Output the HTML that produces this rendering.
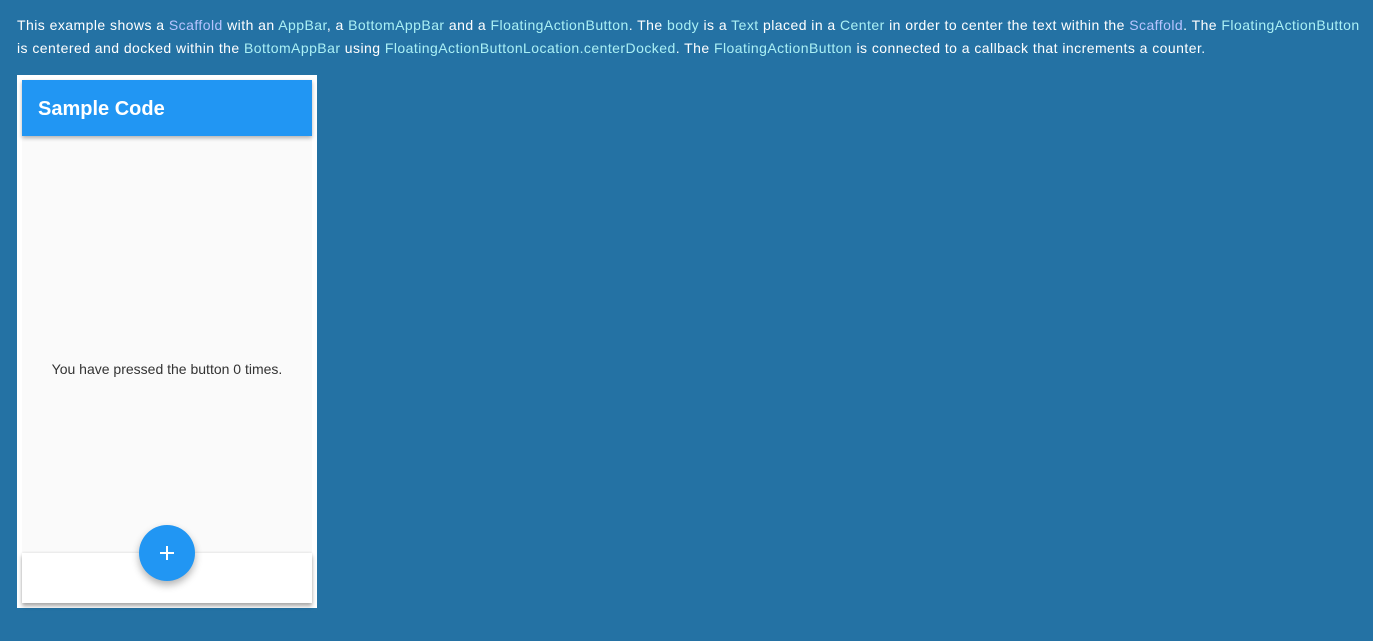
<!DOCTYPE html>
<html><head><style>
body{margin:0;width:1373px;height:641px;background:#2472a4;font-family:"Liberation Sans",sans-serif;overflow:hidden;position:relative}
p{position:absolute;left:17px;top:14px;width:1356px;margin:0;color:#fff;font-size:14px;line-height:23px;letter-spacing:0.45px;white-space:nowrap}
a{color:#aaf0f5;text-decoration:none}
a.v{color:#b7c4ff}
.frame{position:absolute;left:17px;top:75px;width:300px;height:533px;background:#fff}
.in{position:absolute;left:5px;top:5px;width:290px;height:523px;background:#fafafa}
.bar{position:absolute;left:0;top:0;width:290px;height:56px;background:#2196f3;box-shadow:0 2px 4px rgba(0,0,0,.3);color:#fff;font-size:20px;font-weight:bold;line-height:58px;padding-left:16px;box-sizing:border-box}
.msg{position:absolute;left:0;width:290px;top:281px;text-align:center;font-size:14px;color:#333}
.bot{position:absolute;left:0;top:473px;width:290px;height:50px;background:#fff;box-shadow:0 -1px 2px rgba(0,0,0,.06),0 3px 4px rgba(0,0,0,.35)}
.fab{position:absolute;left:117px;top:445px;width:56px;height:56px;border-radius:50%;background:#2196f3;box-shadow:0 4px 8px rgba(0,0,0,.3)}
</style></head><body>
<p>This example shows a <a class="v">Scaffold</a> with an <a>AppBar</a>, a <a>BottomAppBar</a> and a <a>FloatingActionButton</a>. The <a>body</a> is a <a>Text</a> placed in a <a>Center</a> in order to center the text within the <a class="v">Scaffold</a>. The <a>FloatingActionButton</a><br>is centered and docked within the <a>BottomAppBar</a> using <a>FloatingActionButtonLocation.centerDocked</a>. The <a>FloatingActionButton</a> is connected to a callback that increments a counter.</p>
<div class="frame"><div class="in">
<div class="bar">Sample Code</div>
<div class="msg">You have pressed the button 0 times.</div>
<div class="bot"></div>
<div class="fab"><svg width="56" height="56"><path d="M28 21v14M21 28h14" stroke="#fff" stroke-width="2"/></svg></div>
</div></div>
</body></html>
